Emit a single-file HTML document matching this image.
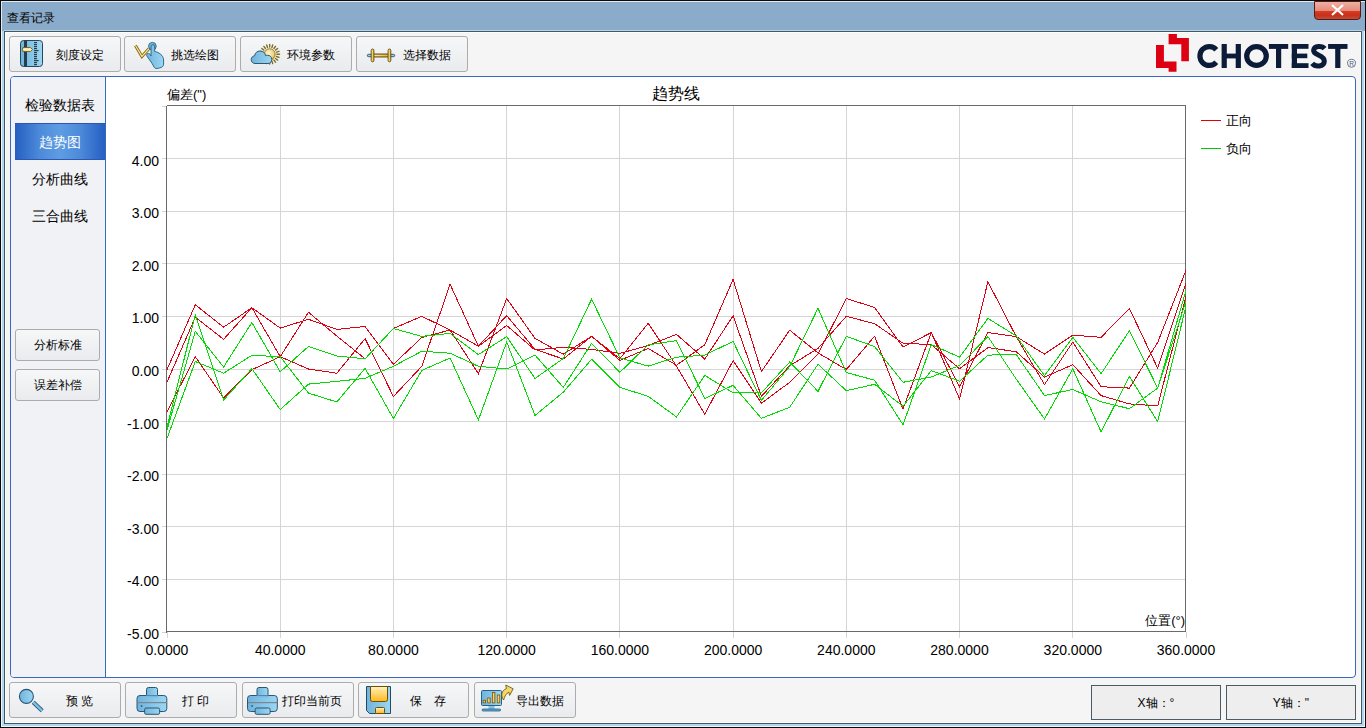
<!DOCTYPE html>
<html><head><meta charset="utf-8">
<style>
*{box-sizing:border-box;margin:0;padding:0}
html,body{width:1366px;height:728px;overflow:hidden;background:#8aabc9;font-family:"Liberation Sans",sans-serif;color:#000}
.a{position:absolute}
#frame{left:0;top:0;width:1366px;height:728px;border:1px solid #0b0b0b;background:#8aabc9}
#hl{left:1px;top:1px;width:1364px;height:1px;background:#dfeaf4}
#hl2{left:1px;top:1px;width:1px;height:726px;background:#dfeaf4}
#tstrip{left:4px;top:30px;width:1358px;height:1px;background:#b9d3e6}
#side{left:1px;top:31px;width:1364px;height:696px;background:#b2d6ee;border:1px solid #eef6fc;border-top:none}
#inner{left:4px;top:31px;width:1358px;height:693px;border:1px solid #405a68;background:#f5f5f5;box-shadow:inset 1px 1px 0 #fff,inset -1px -1px 0 #fff}
#title{left:7px;top:9px;font-size:12px;line-height:18px;color:#000}
#close{left:1314px;top:1px;width:47px;height:19px;border:1px solid #5a1a12;border-radius:0 0 4px 4px;
 background:linear-gradient(#eeb1a3 0%,#e58a7a 52%,#d83a20 56%,#c8301a 78%,#b9503e 100%)}
.btn{position:absolute;border:1px solid #acacac;border-radius:3px;background:linear-gradient(#f6f7f8,#e9ebee)}
.btxt{position:absolute;font-size:12px;line-height:14px;white-space:nowrap}
#tab{left:10px;top:76px;width:1346px;height:602px;border:1px solid #3a68c0;border-radius:4px;background:#fff;overflow:hidden}
#nav{left:0;top:0;width:95px;height:600px;border-right:1px solid #3a68c0;background:#f1f2f5}
.nitem{position:absolute;left:2px;width:94px;text-align:center;font-size:14px;line-height:16px}
#sel{left:4px;top:46px;width:90px;height:37px;background:linear-gradient(90deg,#2460c2 0%,#2f6ac8 7%,#4d8bda 28%,#5e9de3 50%,#4d8bda 72%,#2f6ac8 93%,#2460c2 100%);box-shadow:inset 0 1px 0 #2b57b4,inset 0 -1px 0 #2b57b4}
.box{position:absolute;border:1px solid #4a5a66;background:#eeeeee;font-size:12px;text-align:center;line-height:35px}
</style></head><body>
<div class="a" id="frame"></div>
<div class="a" id="hl"></div>
<div class="a" id="hl2"></div>
<div class="a" id="tstrip"></div>
<div class="a" id="title">查看记录</div>
<div class="a" id="close"><svg width="45" height="17" style="position:absolute;left:0;top:0"><path d="M17 3 L28 13 M28 3 L17 13" stroke="#fff" stroke-width="2.2"/></svg></div>
<div class="a" id="side"></div>
<div class="a" id="inner"></div>

<!-- toolbar -->
<div class="btn" style="left:9px;top:36px;width:112px;height:36px"></div>
<div class="btn" style="left:124px;top:36px;width:112px;height:36px"></div>
<div class="btn" style="left:240px;top:36px;width:112px;height:36px"></div>
<div class="btn" style="left:356px;top:36px;width:112px;height:36px"></div>
<div class="btxt" style="left:56px;top:48px">刻度设定</div>
<div class="btxt" style="left:171px;top:48px">挑选绘图</div>
<div class="btxt" style="left:287px;top:48px">环境参数</div>
<div class="btxt" style="left:403px;top:48px">选择数据</div>

<!-- tab panel -->
<div class="a" id="tab">
 <div class="a" id="nav">
  <div class="nitem" style="top:20px">检验数据表</div>
  <div class="a" id="sel"></div>
  <div class="nitem" style="top:57px;left:4px;width:90px;color:#fff">趋势图</div>
  <div class="nitem" style="top:94px">分析曲线</div>
  <div class="nitem" style="top:131px">三合曲线</div>
  <div class="btn" style="left:4px;top:252px;width:85px;height:32px"></div>
  <div class="btn" style="left:4px;top:292px;width:85px;height:32px"></div>
  <div class="btxt" style="left:23px;top:261px">分析标准</div>
  <div class="btxt" style="left:23px;top:301px">误差补偿</div>
 </div>
</div>

<svg class="a" style="left:0;top:0" width="1366" height="728">
<rect x="167" y="579" width="1018" height="1" fill="#d5d5d5"/>
<rect x="162" y="579" width="4" height="1" fill="#d5d5d5"/>
<rect x="167" y="526" width="1018" height="1" fill="#d5d5d5"/>
<rect x="162" y="526" width="4" height="1" fill="#d5d5d5"/>
<rect x="167" y="474" width="1018" height="1" fill="#d5d5d5"/>
<rect x="162" y="474" width="4" height="1" fill="#d5d5d5"/>
<rect x="167" y="421" width="1018" height="1" fill="#d5d5d5"/>
<rect x="162" y="421" width="4" height="1" fill="#d5d5d5"/>
<rect x="167" y="369" width="1018" height="1" fill="#d5d5d5"/>
<rect x="162" y="369" width="4" height="1" fill="#d5d5d5"/>
<rect x="167" y="316" width="1018" height="1" fill="#d5d5d5"/>
<rect x="162" y="316" width="4" height="1" fill="#d5d5d5"/>
<rect x="167" y="263" width="1018" height="1" fill="#d5d5d5"/>
<rect x="162" y="263" width="4" height="1" fill="#d5d5d5"/>
<rect x="167" y="211" width="1018" height="1" fill="#d5d5d5"/>
<rect x="162" y="211" width="4" height="1" fill="#d5d5d5"/>
<rect x="167" y="158" width="1018" height="1" fill="#d5d5d5"/>
<rect x="162" y="158" width="4" height="1" fill="#d5d5d5"/>
<rect x="280" y="106" width="1" height="525" fill="#d5d5d5"/>
<rect x="280" y="632" width="1" height="6" fill="#d5d5d5"/>
<rect x="393" y="106" width="1" height="525" fill="#d5d5d5"/>
<rect x="393" y="632" width="1" height="6" fill="#d5d5d5"/>
<rect x="506" y="106" width="1" height="525" fill="#d5d5d5"/>
<rect x="506" y="632" width="1" height="6" fill="#d5d5d5"/>
<rect x="619" y="106" width="1" height="525" fill="#d5d5d5"/>
<rect x="619" y="632" width="1" height="6" fill="#d5d5d5"/>
<rect x="733" y="106" width="1" height="525" fill="#d5d5d5"/>
<rect x="733" y="632" width="1" height="6" fill="#d5d5d5"/>
<rect x="846" y="106" width="1" height="525" fill="#d5d5d5"/>
<rect x="846" y="632" width="1" height="6" fill="#d5d5d5"/>
<rect x="959" y="106" width="1" height="525" fill="#d5d5d5"/>
<rect x="959" y="632" width="1" height="6" fill="#d5d5d5"/>
<rect x="1072" y="106" width="1" height="525" fill="#d5d5d5"/>
<rect x="1072" y="632" width="1" height="6" fill="#d5d5d5"/>
<rect x="162" y="106" width="4" height="1" fill="#d5d5d5"/>
<rect x="162" y="632" width="4" height="1" fill="#d5d5d5"/>
<rect x="167" y="632" width="1" height="6" fill="#d5d5d5"/>
<rect x="1186" y="632" width="1" height="6" fill="#d5d5d5"/>
<rect x="166" y="106" width="1" height="527" fill="#6a6a6a"/>
<rect x="167" y="105" width="1019" height="1" fill="#6a6a6a"/>
<rect x="1185" y="105" width="1" height="527" fill="#6a6a6a"/>
<rect x="167" y="631" width="1019" height="1" fill="#6a6a6a"/>
<polyline points="167.0,369.7 195.3,304.8 223.6,327.2 251.9,307.7 280.2,328.1 308.5,319.3 336.8,329.4 365.1,326.5 393.4,364.3 421.8,337.5 450.1,330.0 478.4,373.8 506.7,298.5 535.0,338.4 563.3,354.2 591.6,336.3 619.9,358.7 648.2,323.3 676.5,366.1 704.8,414.2 733.1,360.6 761.4,403.2 789.7,382.3 818.0,354.0 846.3,298.5 874.6,307.5 903.0,347.0 931.3,332.6 959.6,386.7 987.9,332.5 1016.2,336.6 1044.5,354.1 1072.8,335.2 1101.1,337.3 1129.4,308.4 1157.7,368.2 1186.0,283.1" fill="none" stroke="#dc0010" stroke-width="1" shape-rendering="crispEdges"/>
<polyline points="167.0,382.1 195.3,317.2 223.6,339.3 251.9,307.7 280.2,356.7 308.5,312.3 336.8,336.0 365.1,358.8 393.4,328.5 421.8,316.3 450.1,330.0 478.4,346.2 506.7,325.5 535.0,350.0 563.3,347.3 591.6,349.4 619.9,353.4 648.2,345.5 676.5,334.4 704.8,359.1 733.1,315.8 761.4,396.3 789.7,365.8 818.0,348.4 846.3,316.3 874.6,323.7 903.0,343.2 931.3,344.6 959.6,368.8 987.9,347.6 1016.2,351.7 1044.5,377.1 1072.8,364.7 1101.1,395.6 1129.4,403.9 1157.7,405.9 1186.0,296.3" fill="none" stroke="#dc0010" stroke-width="1" shape-rendering="crispEdges"/>
<polyline points="167.0,411.6 195.3,356.7 223.6,397.9 251.9,369.7 280.2,356.7 308.5,369.0 336.8,373.2 365.1,338.6 393.4,396.5 421.8,366.3 450.1,284.3 478.4,346.2 506.7,315.6 535.0,349.4 563.3,359.0 591.6,336.3 619.9,360.4 648.2,348.4 676.5,365.3 704.8,344.7 733.1,279.4 761.4,371.6 789.7,330.2 818.0,352.9 846.3,369.5 874.6,336.3 903.0,409.1 931.3,332.6 959.6,399.1 987.9,281.7 1016.2,336.6 1044.5,384.6 1072.8,342.1 1101.1,386.7 1129.4,388.1 1157.7,342.4 1186.0,270.3" fill="none" stroke="#dc0010" stroke-width="1" shape-rendering="crispEdges"/>
<polyline points="167.0,427.0 195.3,314.6 223.6,400.0 251.9,368.6 280.2,409.6 308.5,384.1 336.8,381.4 365.1,378.3 393.4,366.3 421.8,351.2 450.1,353.2 478.4,366.3 506.7,369.0 535.0,355.1 563.3,387.4 591.6,343.4 619.9,372.3 648.2,344.8 676.5,340.7 704.8,398.4 733.1,385.3 761.4,418.3 789.7,407.3 818.0,364.2 846.3,390.7 874.6,384.3 903.0,406.3 931.3,370.6 959.6,381.2 987.9,355.1 1016.2,354.4 1044.5,395.6 1072.8,389.5 1101.1,401.8 1129.4,408.7 1157.7,388.1 1186.0,301.2" fill="none" stroke="#00dc00" stroke-width="1" shape-rendering="crispEdges"/>
<polyline points="167.0,430.0 195.3,331.4 223.6,367.0 251.9,322.5 280.2,371.8 308.5,346.4 336.8,356.0 365.1,358.8 393.4,328.5 421.8,336.4 450.1,333.4 478.4,354.6 506.7,336.7 535.0,378.5 563.3,358.5 591.6,299.2 619.9,357.9 648.2,366.1 676.5,357.2 704.8,355.1 733.1,341.4 761.4,400.4 789.7,366.5 818.0,308.3 846.3,372.5 874.6,380.2 903.0,424.9 931.3,344.6 959.6,357.2 987.9,318.4 1016.2,335.9 1044.5,375.7 1072.8,337.3 1101.1,373.7 1129.4,330.7 1157.7,388.1 1186.0,290.5" fill="none" stroke="#00dc00" stroke-width="1" shape-rendering="crispEdges"/>
<polyline points="167.0,438.4 195.3,361.5 223.6,373.2 251.9,355.3 280.2,356.7 308.5,393.1 336.8,402.0 365.1,368.4 393.4,418.5 421.8,370.4 450.1,358.0 478.4,419.9 506.7,342.0 535.0,415.5 563.3,392.2 591.6,359.2 619.9,387.4 648.2,396.3 676.5,416.9 704.8,375.4 733.1,392.9 761.4,392.9 789.7,362.0 818.0,391.4 846.3,336.3 874.6,346.6 903.0,382.3 931.3,377.0 959.6,365.4 987.9,336.6 1016.2,379.0 1044.5,419.0 1072.8,368.8 1101.1,432.0 1129.4,376.4 1157.7,421.7 1186.0,306.2" fill="none" stroke="#00dc00" stroke-width="1" shape-rendering="crispEdges"/>
<text x="159" y="639.0" text-anchor="end" font-size="14" font-family="Liberation Sans, sans-serif">-5.00</text>
<text x="159" y="586.4" text-anchor="end" font-size="14" font-family="Liberation Sans, sans-serif">-4.00</text>
<text x="159" y="533.8" text-anchor="end" font-size="14" font-family="Liberation Sans, sans-serif">-3.00</text>
<text x="159" y="481.2" text-anchor="end" font-size="14" font-family="Liberation Sans, sans-serif">-2.00</text>
<text x="159" y="428.6" text-anchor="end" font-size="14" font-family="Liberation Sans, sans-serif">-1.00</text>
<text x="159" y="376.0" text-anchor="end" font-size="14" font-family="Liberation Sans, sans-serif">0.00</text>
<text x="159" y="323.4" text-anchor="end" font-size="14" font-family="Liberation Sans, sans-serif">1.00</text>
<text x="159" y="270.8" text-anchor="end" font-size="14" font-family="Liberation Sans, sans-serif">2.00</text>
<text x="159" y="218.2" text-anchor="end" font-size="14" font-family="Liberation Sans, sans-serif">3.00</text>
<text x="159" y="165.6" text-anchor="end" font-size="14" font-family="Liberation Sans, sans-serif">4.00</text>
<text x="167.0" y="655" text-anchor="middle" font-size="14" font-family="Liberation Sans, sans-serif">0.0000</text>
<text x="280.2" y="655" text-anchor="middle" font-size="14" font-family="Liberation Sans, sans-serif">40.0000</text>
<text x="393.4" y="655" text-anchor="middle" font-size="14" font-family="Liberation Sans, sans-serif">80.0000</text>
<text x="506.7" y="655" text-anchor="middle" font-size="14" font-family="Liberation Sans, sans-serif">120.0000</text>
<text x="619.9" y="655" text-anchor="middle" font-size="14" font-family="Liberation Sans, sans-serif">160.0000</text>
<text x="733.1" y="655" text-anchor="middle" font-size="14" font-family="Liberation Sans, sans-serif">200.0000</text>
<text x="846.3" y="655" text-anchor="middle" font-size="14" font-family="Liberation Sans, sans-serif">240.0000</text>
<text x="959.5" y="655" text-anchor="middle" font-size="14" font-family="Liberation Sans, sans-serif">280.0000</text>
<text x="1072.8" y="655" text-anchor="middle" font-size="14" font-family="Liberation Sans, sans-serif">320.0000</text>
<text x="1186.0" y="655" text-anchor="middle" font-size="14" font-family="Liberation Sans, sans-serif">360.0000</text>
<text x="167" y="99" font-size="13" font-family="Liberation Sans, sans-serif">偏差(")</text>
<text x="676" y="99" text-anchor="middle" font-size="16" font-family="Liberation Sans, sans-serif">趋势线</text>
<text x="1185" y="625" text-anchor="end" font-size="13" font-family="Liberation Sans, sans-serif">位置(°)</text>
<rect x="1201" y="120" width="20" height="1" fill="#e00000"/>
<rect x="1201" y="148" width="20" height="1" fill="#00c800"/>
<text x="1226" y="125" font-size="13" font-family="Liberation Sans, sans-serif">正向</text>
<text x="1226" y="153" font-size="13" font-family="Liberation Sans, sans-serif">负向</text>
</svg>
<!-- bottom -->
<div class="btn" style="left:9px;top:682px;width:112px;height:36px"></div>
<div class="btn" style="left:125px;top:682px;width:112px;height:36px"></div>
<div class="btn" style="left:242px;top:682px;width:112px;height:36px"></div>
<div class="btn" style="left:358px;top:682px;width:111px;height:36px"></div>
<div class="btn" style="left:474px;top:682px;width:102px;height:36px"></div>
<div class="btxt" style="left:66px;top:694px">预 览</div>
<div class="btxt" style="left:182px;top:694px">打 印</div>
<div class="btxt" style="left:282px;top:694px">打印当前页</div>
<div class="btxt" style="left:410px;top:694px">保</div><div class="btxt" style="left:434px;top:694px">存</div>
<div class="btxt" style="left:516px;top:694px">导出数据</div>
<div class="box" style="left:1091px;top:685px;width:130px;height:35px">X轴：°</div>
<div class="box" style="left:1226px;top:685px;width:130px;height:35px">Y轴："</div>

<svg class="a" style="left:0;top:0" width="1366" height="728">
<defs>
<linearGradient id="bl" x1="0" x2="1" y1="0" y2="0"><stop offset="0" stop-color="#6fb3dc"/><stop offset="1" stop-color="#9cd7f2"/></linearGradient>
<linearGradient id="yl" x1="0" x2="0" y1="0" y2="1"><stop offset="0" stop-color="#fff2c0"/><stop offset="1" stop-color="#ffb61e"/></linearGradient>
<linearGradient id="yh" x1="0" x2="1" y1="0" y2="0"><stop offset="0" stop-color="#ffe9a0"/><stop offset="1" stop-color="#f0b030"/></linearGradient>
</defs>
<!-- scale icon -->
<rect x="20.5" y="40.5" width="22" height="26" rx="3" fill="url(#bl)" stroke="#27465a"/>
<rect x="24" y="41" width="3" height="25" fill="#263d4c"/>
<g fill="#2a3f4e">
<rect x="34" y="42" width="3" height="1.2"/><rect x="34" y="44" width="3" height="1.2"/><rect x="34" y="46" width="3" height="1.2"/><rect x="34" y="48" width="3" height="1.2"/>
<rect x="34" y="50" width="4.6" height="1.2"/><rect x="34" y="52" width="3" height="1.2"/><rect x="34" y="54" width="3" height="1.2"/><rect x="34" y="56" width="3" height="1.2"/>
<rect x="34" y="58" width="3" height="1.2"/><rect x="34" y="60" width="4.6" height="1.2"/><rect x="34" y="62" width="3" height="1.2"/><rect x="34" y="64" width="3" height="1.2"/>
</g>
<path d="M22.8 47.6 H30.5 L32.4 49.5 L30.5 51.4 H22.8 Q22.3 49.5 22.8 47.6 Z" fill="#fff4cc" stroke="#7a5a08" stroke-width="1"/>
<!-- pick icon -->
<polyline points="135.4,45.5 141.9,56.4 149.1,48.5" fill="none" stroke="#7d6410" stroke-width="3" stroke-linejoin="miter"/>
<polyline points="135.4,45.5 141.9,56.4 149.1,48.5" fill="none" stroke="#ffe58a" stroke-width="1.2"/>
<circle cx="152.4" cy="46.2" r="3.8" fill="#7ab9dc" stroke="#2f6d90" stroke-width="1"/>
<path d="M151 46.8 Q151 44.6 152.85 44.6 Q154.7 44.6 154.7 46.8 L154.7 51.5 Q156.8 51.9 158 52.5 Q160.8 53.6 162.7 56.7 Q163.8 58.4 163.6 61 L163.6 64.1 Q163.4 66 162.7 66.5 Q161 67.7 159.9 67.9 L156.1 68.6 Q154.9 68.4 154.3 67.4 L151.9 63.2 L149.6 59.9 L147.3 56.7 Q146.4 55.6 146.6 54.6 Q147 53.4 148.4 53.4 Q149.6 53.6 150.1 54.3 L151 56 Z" fill="url(#bl)" stroke="#2f6d90" stroke-width="1" stroke-linejoin="round"/>
<!-- env icon -->
<g stroke="#7d6c22" stroke-width="1.4" stroke-linecap="round"><path d="M269.7 47.1 L269.7 44.5 M271.9 47.5 L272.7 45.0 M273.9 48.5 L275.5 46.4 M275.5 50.1 L277.6 48.5 M276.5 52.1 L279.0 51.3 M276.9 54.3 L279.5 54.3 M276.5 56.5 L279.0 57.3 M275.5 58.5 L277.6 60.1 M273.9 60.1 L275.5 62.2 M271.9 61.1 L272.7 63.6 M269.7 61.5 L269.7 64.1 M267.5 61.1 L266.7 63.6 M265.5 60.1 L263.9 62.2 M263.9 58.5 L261.8 60.1 M262.9 56.5 L260.4 57.3 M262.5 54.3 L259.9 54.3 M262.9 52.1 L260.4 51.3 M263.9 50.1 L261.8 48.5 M265.5 48.5 L263.9 46.4 M267.5 47.5 L266.7 45.0"/></g>
<radialGradient id="sun" cx="0.4" cy="0.4" r="0.7"><stop offset="0" stop-color="#fff6d0"/><stop offset="0.7" stop-color="#f0d070"/><stop offset="1" stop-color="#c8a030"/></radialGradient><circle cx="269.7" cy="54.3" r="5.5" fill="url(#sun)" stroke="#8a7420" stroke-width="0.9"/>
<path d="M255 63.5 L268 63.5 C270.5 63.5 271.8 61.5 271.8 59.5 C271.8 57 270 55.3 267.5 55.3 C267 55.3 266.2 55.4 265.6 55.7 C265.2 52.8 263 51 260 51 C257.2 51 255 52.8 254.6 55.8 C252.5 56 251.2 57.7 251.2 59.7 C251.2 61.8 252.8 63.5 255 63.5 Z" fill="url(#bl)" stroke="#2d5874" stroke-width="1"/>
<!-- select data icon -->
<rect x="367.3" y="54.3" width="27.4" height="2.4" rx="1.2" fill="#90d2f2" stroke="#2a5070" stroke-width="0.9"/>
<rect x="373" y="54.1" width="15.6" height="2.8" fill="url(#yh)" stroke="#5a4a00" stroke-width="0.9"/>
<rect x="371.2" y="49" width="2.7" height="12.8" rx="1.35" fill="url(#yh)" stroke="#5a4a00" stroke-width="0.9"/>
<rect x="388.1" y="49" width="2.7" height="12.8" rx="1.35" fill="url(#yh)" stroke="#5a4a00" stroke-width="0.9"/>
<!-- magnifier -->
<line x1="33.2" y1="702.2" x2="42.2" y2="710.8" stroke="#2a5570" stroke-width="4.2" stroke-linecap="butt"/>
<line x1="33.2" y1="702.2" x2="42.2" y2="710.8" stroke="#7cc2e8" stroke-width="2.4"/>
<circle cx="26.4" cy="696.4" r="7" fill="url(#bl)" stroke="#2a5570" stroke-width="1.1"/>
<!-- printers -->
<g id="pr1">
<rect x="146.5" y="687.5" width="11" height="10.5" rx="2" fill="url(#bl)" stroke="#2d5470"/>
<rect x="137" y="695.5" width="29.8" height="16" rx="3" fill="url(#bl)" stroke="#2d5470"/>
<rect x="146" y="695.5" width="12" height="2" fill="#7ab9de"/>
<rect x="137.5" y="702" width="29" height="1.2" fill="#7a8790"/>
<circle cx="141.6" cy="706" r="0.9" fill="#3d5b6e"/>
<rect x="144.6" y="708" width="15" height="6.3" rx="1.5" fill="url(#bl)" stroke="#2d5470"/>
</g>
<use href="#pr1" x="110.5" y="0"/>
<!-- floppy -->
<path d="M366.5 686.5 H390.5 V713.5 H369.5 L366.5 710.5 Z" fill="url(#bl)" stroke="#244a60"/>
<path d="M370.5 686.5 H387.5 V699.5 Q387.5 701.5 385.5 701.5 H372.5 Q370.5 701.5 370.5 699.5 Z" fill="url(#yl)" stroke="#6a5000"/>
<rect x="375.5" y="707.5" width="9" height="6" rx="1" fill="url(#yl)" stroke="#6a5000"/>
<!-- export -->
<rect x="481.5" y="690.5" width="20" height="15" rx="1" fill="url(#bl)" stroke="#2a6088"/>
<rect x="488.5" y="706" width="6" height="3.2" fill="#7ec4ea"/>
<rect x="482" y="709" width="18.6" height="2" rx="1" fill="#5ea8d2" stroke="#2a6088" stroke-width="0.8"/>
<g fill="url(#yh)" stroke="#7a5a00" stroke-width="0.8">
<rect x="483.2" y="700.3" width="2.4" height="2.5"/><rect x="487.7" y="698" width="2.5" height="4.9"/>
<rect x="492.4" y="692.5" width="2.5" height="10.4"/><rect x="497.3" y="695" width="2.5" height="7.9"/>
</g>
<path d="M503.6 700 C500.6 696 501.2 690.6 506.4 688.6 L505.8 685 L513.2 688.8 L509.6 695.4 L508.9 692.2 C506.2 693.4 504.6 696.2 503.6 700 Z" fill="#f6d66a" stroke="#6e5a10" stroke-width="0.9" stroke-linejoin="round"/>
<!-- logo -->
<path d="M1168.6 34.1 H1176.9 V37.9 H1188.9 V61.3 H1181.3 V44.2 H1168.6 Z" fill="#dc0012"/>
<path d="M1156 44.9 H1163.9 V61.6 H1176.5 V71.7 H1168.6 V67.9 H1156 Z" fill="#dc0012"/>
<g fill="#0c1b38"><path d="M1216.29 49.71 A9.4 9.4 0 1 0 1216.29 62.29" fill="none" stroke="#0c1b38" stroke-width="5.2"/>
<rect x="1221.6" y="44" width="5.2" height="24"/><rect x="1235.7" y="44" width="5.2" height="24"/><rect x="1224" y="53.6" width="14" height="4.8"/>
<ellipse cx="1256.5" cy="56" rx="9.8" ry="9.4" fill="none" stroke="#0c1b38" stroke-width="5.2"/>
<rect x="1268.9" y="44" width="19.3" height="4.9"/><rect x="1276" y="44" width="5.2" height="24"/>
<rect x="1291.8" y="44" width="5.2" height="24"/><rect x="1291.8" y="44" width="16.7" height="4.8"/><rect x="1291.8" y="53.6" width="15.5" height="4.6"/><rect x="1291.8" y="63.2" width="16.7" height="4.8"/>
<path d="M1324.6 48.6 C1322.4 45.8 1314 45.2 1313.6 50.4 C1313.3 55.6 1324.4 54.4 1324.3 61.2 C1324.2 67 1315.2 67.2 1312.2 63.4" fill="none" stroke="#0c1b38" stroke-width="5"/>
<rect x="1328.1" y="44" width="19.4" height="4.9"/><rect x="1335.2" y="44" width="5.2" height="24"/></g>
<circle cx="1351.5" cy="63.3" r="4" fill="none" stroke="#4a5a78" stroke-width="0.8"/>
<text x="1351.5" y="65.8" text-anchor="middle" font-family="Liberation Sans, sans-serif" font-size="6.5" fill="#4a5a78">R</text>
</svg>
</body></html>
